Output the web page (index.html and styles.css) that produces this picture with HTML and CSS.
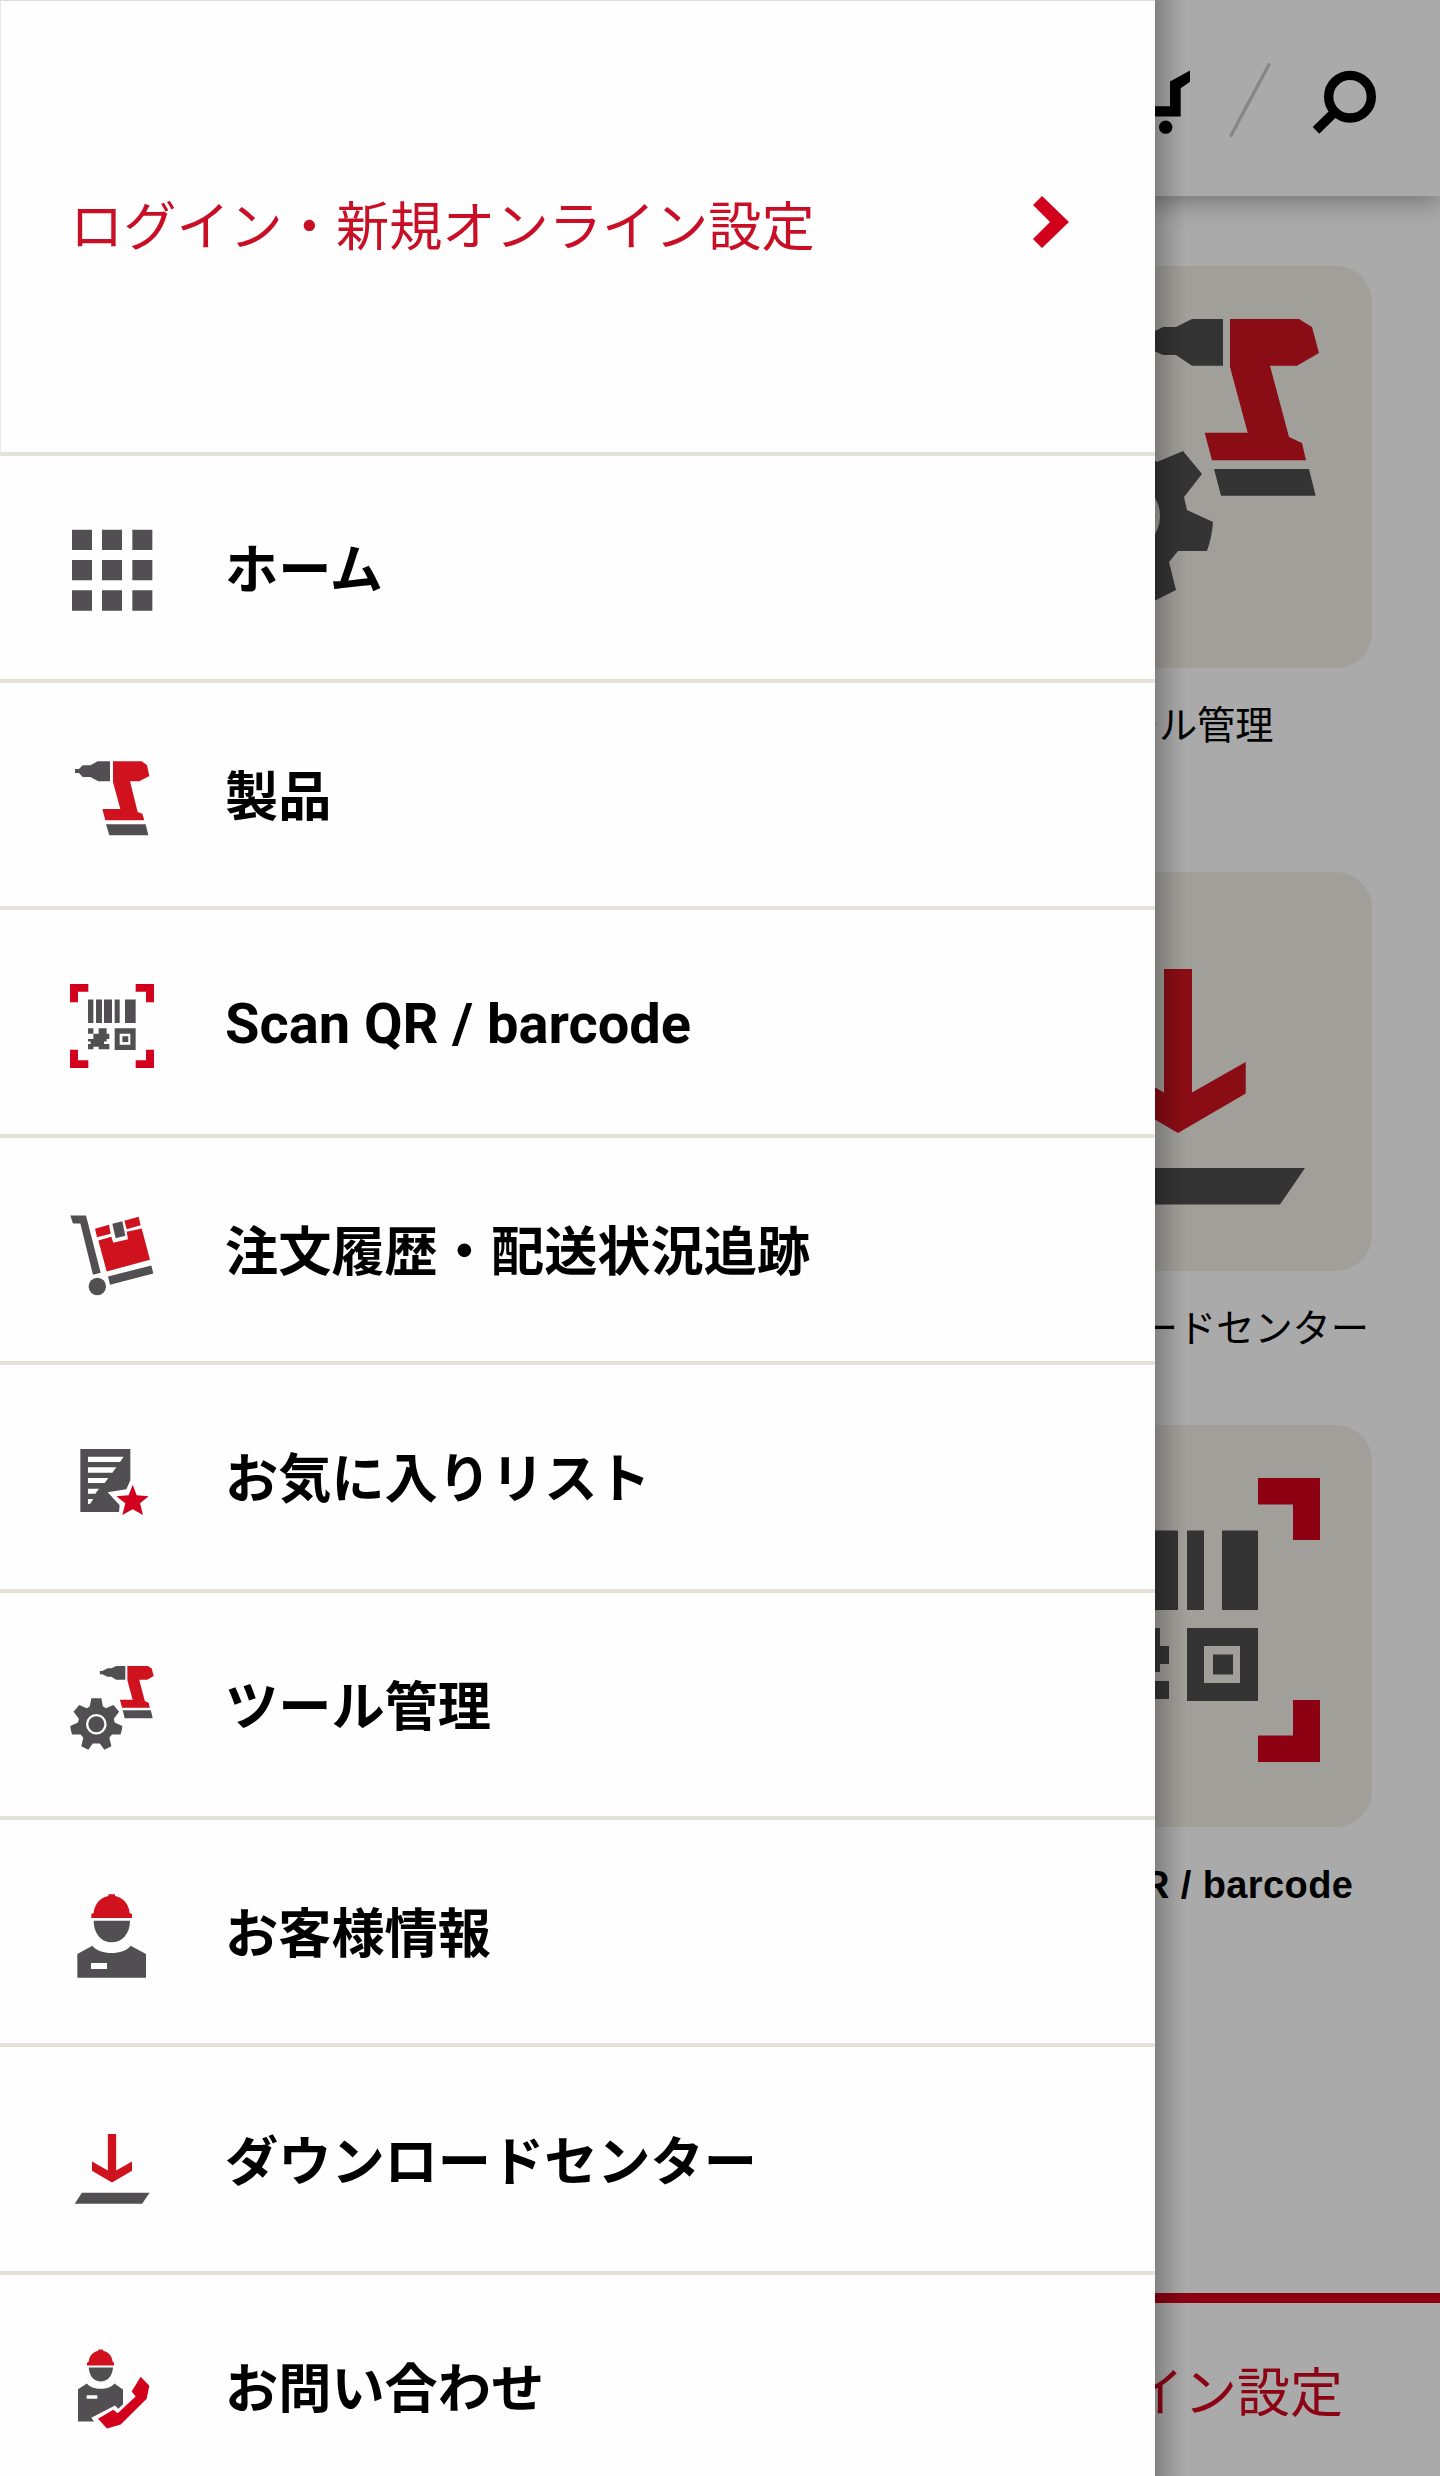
FILE: index.html
```html
<!DOCTYPE html>
<html lang="ja">

<head>
    <meta charset="utf-8">
    <title>メニュー</title>
    <link rel="stylesheet" href="styles.css">
</head>

<body>
    <!-- icons used both in the menu and on the home tiles -->
    <svg class="sprite" width="0" height="0">
        <symbol id="icon-tools" viewBox="0 0 284 284">
            <path class="gray" d="M187 0H156L140 8H127L109 17H101V28H109L127 36H140L156 46.700H187Z" />
            <path class="red" d="M194 0H263L276 8L283 34L261 46.700H234L253 118L266 124L270 141.300H176L168.700 113.700H211.700L194 48Z" />
            <path class="gray" d="M178 150H273L279.700 176.700H185Z" />
            <path class="gray" fill-rule="evenodd" d="M106 109L111 136L121 143L147 132L166 155L148 178L151 191L177 203Q176 218 171 232H142L133 243L140 271L116 283L101 262H77L62 283L38 271L45 243L36 232H7Q2 218 1 203L27 191L30 178L12 155L31 132L57 143L67 136L72 109ZM54 197a35 35 0 1 0 70 0a35 35 0 1 0 -70 0Z" />
            <circle class="gray" cx="89" cy="197" r="27" />
        </symbol>
        <symbol id="icon-download" viewBox="0 0 284 284">
            <path class="red" d="M128 44H156V167.500L209.700 137V168.500L142 208L74.300 168.500V137L128 167.500Z" />
            <path class="gray" d="M40 243H269L244 279.500H16Z" />
        </symbol>
        <symbol id="icon-scan" viewBox="0 0 284 284">
            <path class="bright" d="M0 0H62V26.500H27V62H0ZM222 0H284V62H257V26.500H222ZM0 222H27V257.500H62V284H0ZM257 222H284V284H222V257.500H257Z" />
            <path class="gray" d="M61 52.500H79V132H61ZM88 52.500H108V132H88ZM115 52.500H142V132H115ZM151 52.500H168V132H151ZM186 52.500H222V132H186Z" />
            <path class="gray" d="M61 150H79V168H61ZM97 150H124V168H133V186H124V194H115V203H133V221H97V212H79V221H61V203H70V194H61V186H79V168H97Z" />
            <path class="gray" fill-rule="evenodd" d="M151 150H222V223H151ZM168 168V205H204V168Z" />
            <path class="gray" d="M177 176.500H197V196.500H177Z" />
        </symbol>
    </svg>

    <div class="app">
        <header class="header">
            <svg class="cart" viewBox="-60 200 240 200">
                <path d="M180 210V244L152 263V348H-30L-60 240H-24L-4 317H120V243Z" />
                <circle cx="107" cy="380" r="20" />
                <circle cx="0" cy="380" r="20" />
            </svg>
            <svg class="divider" viewBox="296 184 126 228">
                <path d="M300 408L418 188" />
            </svg>
            <svg class="search" viewBox="546 208 192 192">
                <circle cx="660" cy="288" r="64" />
                <path d="M610 338L558 389" />
            </svg>
        </header>

        <main class="tiles">
            <div class="tile">
                <div class="tile-box"><svg><use href="#icon-tools" /></svg></div>
                <p class="tile-label">ツール管理</p>
            </div>
            <div class="tile">
                <div class="tile-box short"><svg><use href="#icon-download" /></svg></div>
                <p class="tile-label">ダウンロードセンター</p>
            </div>
            <div class="tile">
                <div class="tile-box"><svg><use href="#icon-scan" /></svg></div>
                <p class="tile-label latin">Scan QR / barcode</p>
            </div>
        </main>

        <footer class="footer">ログイン・新規オンライン設定</footer>
    </div>

    <div class="overlay"></div>

    <nav class="drawer">
        <a class="login">
            <span>ログイン・新規オンライン設定</span>
            <svg class="chevron" viewBox="0 0 36 52">
                <path class="bright" d="M9 0L36 26L9 52L0 43L17 26L0 9Z" />
            </svg>
        </a>
        <ul class="menu">
            <li>
                <svg viewBox="60 88 252 252">
                    <path class="gray" d="M66 90h60v61h-60zM156 90h60v61h-60zM247 90h60v61h-60zM66 181h60v61h-60zM156 181h60v61h-60zM247 181h60v61h-60zM66 272h60v61h-60zM156 272h60v61h-60zM247 272h60v61h-60z" />
                </svg>
                <span>ホーム</span>
            </li>
            <li>
                <svg viewBox="60 770 252 252">
                    <path class="gray" d="M180 783H143L121 795H98L87 806H75V818H87L98 830H121L145 843H180Z" />
                    <path class="red" d="M189 783H275L291 794L298 827L268 843H240L263 935L277 940L283 960H166L157 926H211L189 846Z" />
                    <path class="gray" d="M168 972H287L295 1005H178Z" />
                </svg>
                <span>製品</span>
            </li>
            <li>
                <svg><use href="#icon-scan" /></svg>
                <span class="scan-text">Scan QR / barcode</span>
            </li>
            <li>
                <svg viewBox="60 754.5 252 252">
                    <path class="gray" d="M61 765H108L152 937L129 943L91 789H69Z" />
                    <circle class="gray" cx="142" cy="978" r="26" />
                    <path class="gray" d="M174 948L304 915L310 939L180 973Z" />
                    <path class="red" d="M145 840L184 829L190 847L234 836L230 814L275 804L300 898L170 933Z" />
                    <path class="red" d="M135 805L177 793L182 820L141 830ZM223 781L266 769L272 794L230 806Z" />
                    <path class="gray" d="M187 790L217 782L226 826L197 833Z" />
                </svg>
                <span>注文履歴・配送状況追跡</span>
            </li>
            <li>
                <svg viewBox="60 57 252 252">
                    <path class="gray" fill-rule="evenodd" d="M91 87H241V181L229 208L173 217L209 256L207 276H91ZM114 110V126H210L221 110ZM114 142V158H187L199 142ZM114 174V189H164L175 174ZM114 206V221H136L147 206ZM114 237V252H120L130 237Z" />
                    <path class="bright" d="M248 194L260 226L296 229L270 250L279 285L248 268L217 285L226 250L199 229L236 226Z" />
                </svg>
                <span>お気に入りリスト</span>
            </li>
            <li>
                <svg><use href="#icon-tools" /></svg>
                <span>ツール管理</span>
            </li>
            <li>
                <svg viewBox="60 71 252 252">
                    <path class="red" d="M124 143V131L131 128C133 101 152 81 175 77V72H195V77C218 81 237 101 239 128L246 131V143Z" />
                    <path class="gray" d="M131 151H240C240 192 214 216 185 216S131 192 131 151Z" />
                    <path class="gray" fill-rule="evenodd" d="M82 251L127 226C150 255 220 255 242 226L288 251V322H82ZM123 278V296H171V278Z" />
                </svg>
                <span>お客様情報</span>
            </li>
            <li>
                <svg><use href="#icon-download" /></svg>
                <span>ダウンロードセンター</span>
            </li>
            <li>
                <svg viewBox="60 115.5 252 252">
                    <path class="red" d="M111 165V157L116 154C118 136 130 123 145 121V117H159V121C174 123 186 136 188 154L192 157V165Z" />
                    <path class="gray" d="M116 171H189C187 198 171 213 152 213S118 198 116 171Z" />
                    <path class="gray" fill-rule="evenodd" d="M84 236L111 219C125 240 180 240 193 219L219 237V281L205 295L195 285L124 322L132 333H84ZM110 254V265H142V254Z" />
                    <path class="bright" d="M272 199L298 226L290 265L212 342L171 354L144 325L190 298L203 308L257 258L245 243Z" />
                </svg>
                <span>お問い合わせ</span>
            </li>
        </ul>
    </nav>
</body>

</html>
```
FILE: styles.css
```css
* {
    box-sizing: border-box;
}

body {
    position: relative;
    width: 1440px;
    height: 2476px;
    margin: 0;
    overflow: hidden;
    background: #fff;
    color: #000;
    font-family: Roboto, "Noto Sans CJK JP", sans-serif;
}

.sprite {
    position: absolute;
}

.gray {
    fill: var(--icon-gray, #524f53);
}

.red {
    fill: #d0121f;
}

.bright {
    fill: #d2001c;
}

/* home screen behind the drawer */
.app {
    display: flex;
    flex-direction: column;
    height: 2476px;
}

.header {
    display: flex;
    flex: none;
    align-items: center;
    justify-content: flex-end;
    height: 196px;
    padding: 4px 64px 0 0;
    box-shadow: 0 6px 24px rgba(0, 0, 0, 0.32);
}

.cart {
    width: 80px;
    height: 67px;
}

.divider {
    width: 42px;
    height: 76px;
    margin: 0 41px 0 39px;
    fill: none;
    stroke: #cacaca;
    stroke-width: 10;
}

.search {
    width: 64px;
    height: 64px;
    margin-top: 3px;
    fill: none;
    stroke: #000;
    stroke-width: 28;
}

.tiles {
    display: grid;
    flex: 1;
    grid-template-rows: 605.500px 553px 1fr;
    justify-content: end;
    padding: 70px 68px 0 0;
}

.tile {
    width: 388px;
}

.tile-box {
    height: 402px;
    padding: 53px 52px;
    border-radius: 36px;
    background: #f1efe8;
    --icon-gray: #4f4f4f;
}

.tile-box.short {
    height: 399px;
}

.tile-box svg {
    display: block;
    width: 284px;
    height: 284px;
}

.tile-label {
    margin: 30px 0 0;
    font-size: 38.200px;
    line-height: 56px;
    text-align: center;
    white-space: nowrap;
}

.latin {
    padding-left: 6px;
    font-family: "Liberation Sans", sans-serif;
    font-weight: bold;
    font-size: 38px;
    letter-spacing: 0.400px;
}

.footer {
    flex: none;
    height: 183px;
    padding: 61px 97px 0 0;
    border-top: 10px solid #d2001c;
    color: #d2051e;
    font-size: 53px;
    line-height: 60px;
    text-align: right;
}

.overlay {
    position: absolute;
    inset: 0;
    background: rgba(0, 0, 0, 0.333);
}

/* shadow cast by the drawer */
.overlay::after {
    content: "";
    position: absolute;
    top: 0;
    bottom: 0;
    left: 1155px;
    width: 32px;
    background: linear-gradient(to right, rgba(0, 0, 0, 0.24), rgba(0, 0, 0, 0.07) 60%, transparent);
}

/* drawer */
.drawer {
    position: absolute;
    top: 0;
    left: 0;
    width: 1155px;
    height: 2476px;
    overflow: hidden;
    background: #fefefe;
}

.login {
    display: flex;
    align-items: center;
    justify-content: space-between;
    height: 455.700px;
    padding: 0 86px 8px 69px;
    border-top: 1px solid #ddd;
    border-left: 1px solid #e8e8e8;
    border-bottom: 4px solid #e4e1d8;
    color: #c80f26;
    font-size: 53.200px;
}

.chevron {
    width: 36px;
    height: 52px;
}

.menu {
    margin: 0;
    padding: 0;
    list-style: none;
}

.menu li {
    display: flex;
    align-items: center;
    gap: 71px;
    height: 227.400px;
    padding-left: 70px;
    border-bottom: 4px solid #e4e1d8;
    font-size: 53.200px;
    font-weight: bold;
}

.menu span {
    padding-bottom: 4px;
}

.menu svg {
    width: 84px;
    height: 84px;
    margin-top: 8px;
}

.menu .scan-text {
    padding: 4px 0 0;
    font-size: 56px;
}
```
